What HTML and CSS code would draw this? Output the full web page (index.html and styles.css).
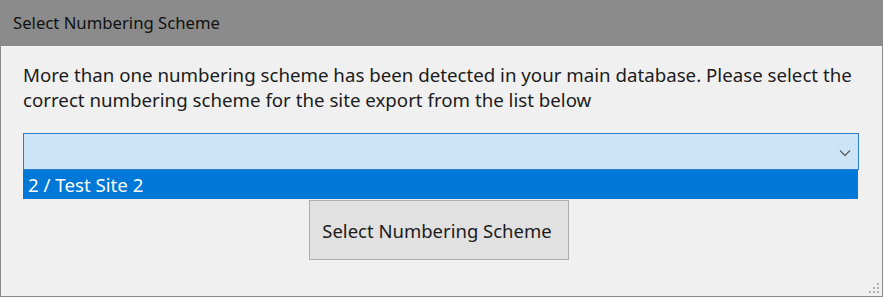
FILE: index.html
```html
<!DOCTYPE html>
<html>
<head>
<meta charset="utf-8">
<link rel="stylesheet" href="styles.css">
</head>
<body>
<div class="window">
  <div class="titlebar">Select Numbering Scheme</div>
  <div class="content">
    <p class="message">More than one numbering scheme has been detected in your main database. Please select the correct numbering scheme for the site export from the list below</p>
    <div class="combo">
      <div class="combo-box">
        <svg class="chevron" width="12" height="8" viewBox="0 0 12 8"><path d="M1 1.5 L6 6.5 L11 1.5" fill="none" stroke="#606060" stroke-width="1.3"/></svg>
      </div>
      <div class="combo-list">
        <div class="combo-item">2 / Test Site 2</div>
      </div>
    </div>
    <div class="actions">
      <button class="btn">Select Numbering Scheme</button>
    </div>
    <div class="grip">
      <span></span><span></span><span></span><span></span><span></span><span></span>
    </div>
  </div>
</div>
</body>
</html>
```

FILE: styles.css
```css
html, body {
  margin: 0;
  padding: 0;
}
body {
  width: 883px;
  height: 297px;
  overflow: hidden;
  font-family: "Noto Sans", "Open Sans", sans-serif;
  color: #1a1a1a;
}
.window {
  width: 883px;
  height: 297px;
  box-sizing: border-box;
  border: 1px solid #8a8a8a;
  border-top: none;
  display: flex;
  flex-direction: column;
  background: #f0f0f0;
}
.titlebar {
  height: 46px;
  background: #8b8b8b;
  margin: 0 -1px;
  padding-left: 13px;
  box-sizing: border-box;
  font-size: 16.7px;
  line-height: 46px;
  color: #111;
}
.content {
  position: relative;
  flex: 1;
  padding: 16px 23px 0 22px;
}
.message {
  margin: 0;
  font-size: 18.7px;
  line-height: 25px;
  color: #1b1b1b;
}
.combo {
  position: relative;
  margin-top: 21px;
  width: 836px;
}
.combo-box {
  height: 37px;
  box-sizing: border-box;
  border: 1px solid #2f7fcc;
  background: #cce4f7;
  position: relative;
}
.chevron {
  position: absolute;
  right: 7px;
  top: 15px;
}
.combo-list {
  position: absolute;
  left: 0;
  top: 37px;
  width: 835px;
  height: 29px;
  background: #0078d7;
  z-index: 2;
}
.combo-item {
  color: #fff;
  font-size: 18.7px;
  line-height: 29px;
  padding-left: 5px;
}
.actions {
  margin-top: 30px;
  padding-left: 286px;
}
.btn {
  width: 260px;
  height: 60px;
  background: #e1e1e1;
  border: 1px solid #adadad;
  font-family: inherit;
  font-size: 18.5px;
  color: #1b1b1b;
  padding: 0 4px 0 0;
}
.grip {
  position: absolute;
  right: 3px;
  bottom: 3px;
  width: 10px;
  height: 10px;
}
.grip span {
  position: absolute;
  width: 2px;
  height: 2px;
  background: #b0b0b0;
}
.grip span:nth-child(1) { right: 0; bottom: 0; }
.grip span:nth-child(2) { right: 4px; bottom: 0; }
.grip span:nth-child(3) { right: 8px; bottom: 0; }
.grip span:nth-child(4) { right: 0; bottom: 4px; }
.grip span:nth-child(5) { right: 4px; bottom: 4px; }
.grip span:nth-child(6) { right: 0; bottom: 8px; }
```
